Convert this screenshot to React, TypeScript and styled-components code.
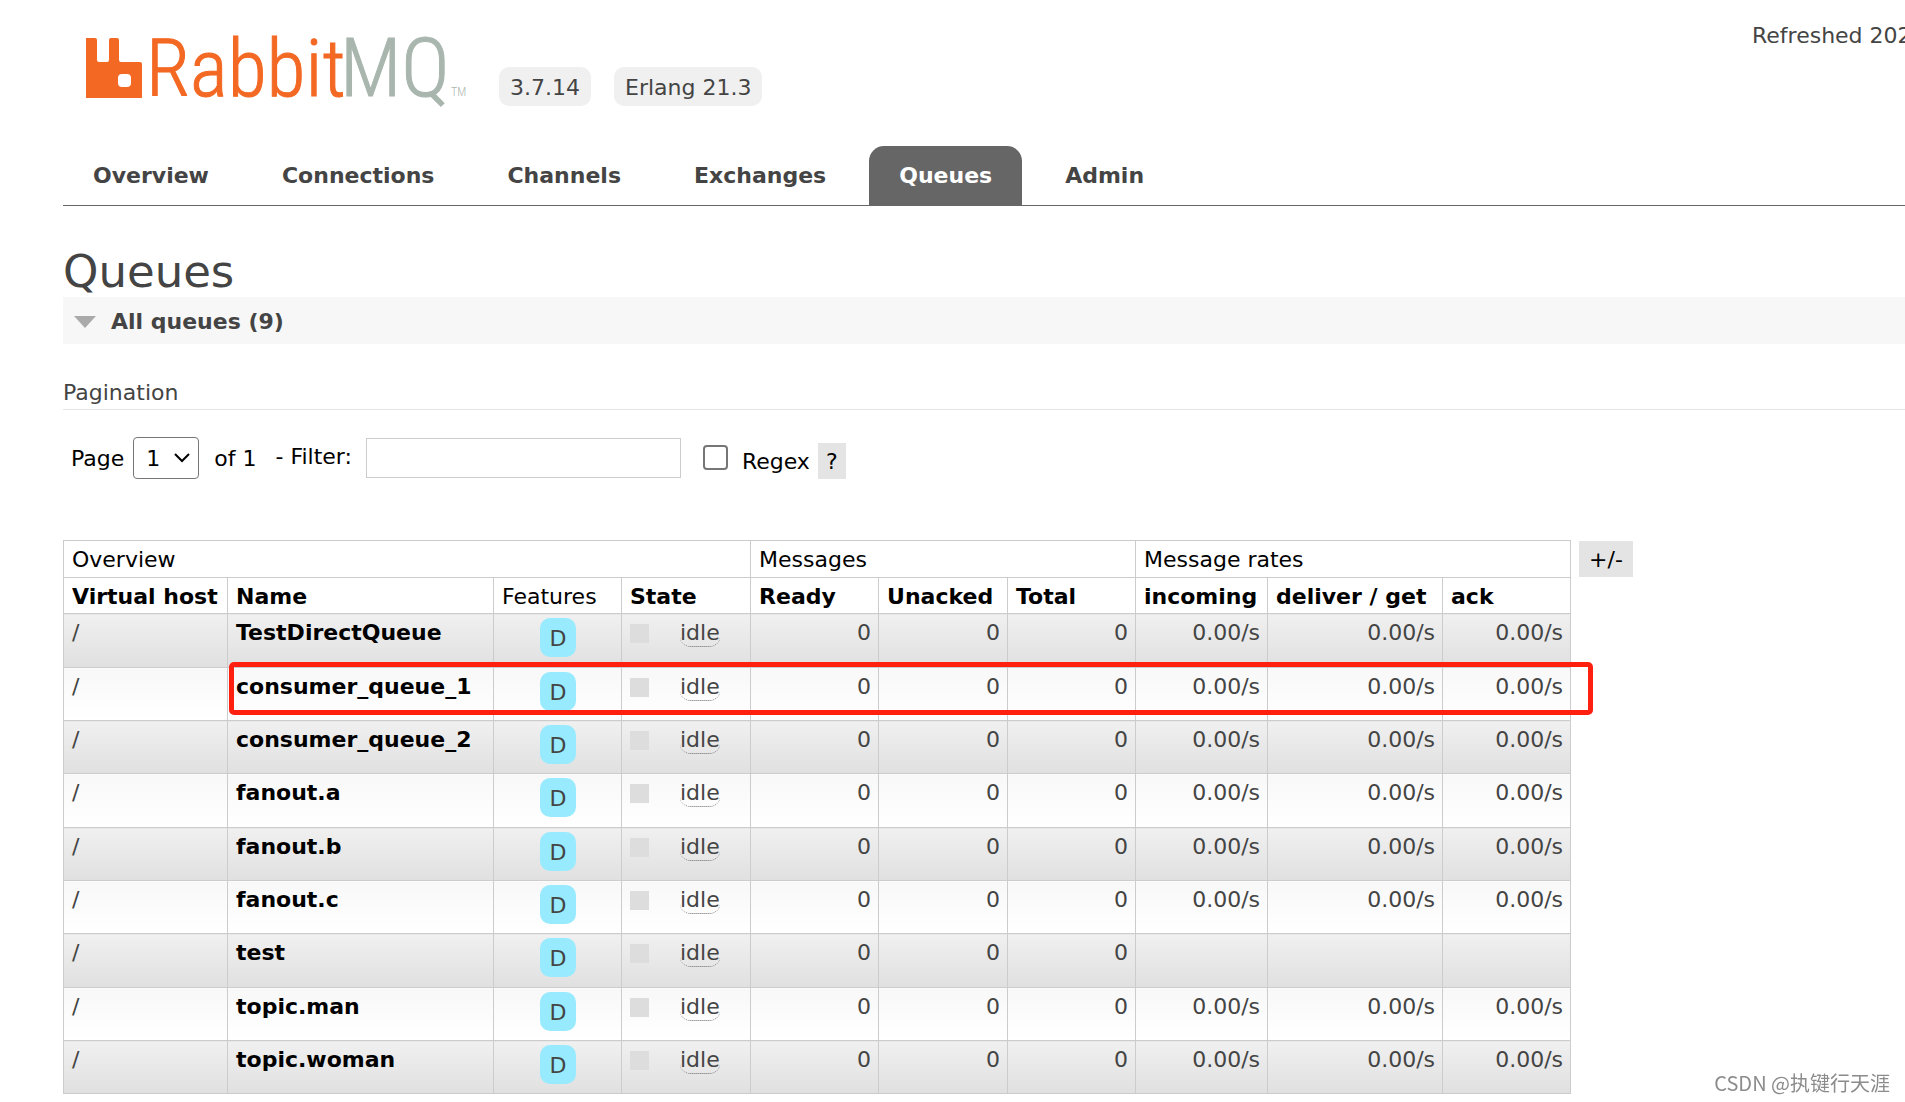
import React from "react";
import styled, { createGlobalStyle } from "styled-components";

const GlobalStyle = createGlobalStyle`
  * { box-sizing: border-box; }
  body {
    margin: 0;
    background: #fff;
    color: #444;
    font: 22px/26px "DejaVu Sans", Verdana, sans-serif;
    overflow: hidden;
  }
  button, input, select { font: inherit; }
`;

const Page = styled.div`
  padding-left: 63px;
`;

const Header = styled.header`
  display: flex;
  justify-content: space-between;
  align-items: flex-start;
  height: 146px;
`;

const Brand = styled.div`
  display: flex;
  align-items: flex-end;
  height: 106px;
  padding-left: 23px;
`;

const LogoLink = styled.a`
  display: block;
  width: 390px;
  height: 80px;
  margin-bottom: 6px;

  svg {
    display: block;
    overflow: visible;
  }
`;

const Versions = styled.div`
  display: flex;
  gap: 23px;
  margin-left: 23px;
`;

const Version = styled.span`
  padding: 8px 11px 5px;
  border-radius: 10px;
  background: #f0f0f0;
`;

const Status = styled.div`
  width: 153px;
  padding-top: 23px;
  white-space: nowrap;
`;

const Tabs = styled.nav`
  display: flex;
  gap: 13px;
  border-bottom: 1px solid #666;
`;

const Tab = styled.a<{ $active?: boolean }>`
  padding: 17px 30px 16px;
  border-radius: 15px 15px 0 0;
  background: ${(p) => (p.$active ? "#666" : "transparent")};
  color: ${(p) => (p.$active ? "#fff" : "#444")};
  font-weight: bold;
  text-decoration: none;
`;

const Title = styled.h1`
  margin: 40px 0 0;
  font-size: 45px;
  line-height: 51px;
  font-weight: normal;
`;

const SectionBar = styled.h2`
  display: flex;
  align-items: center;
  gap: 15px;
  height: 47px;
  margin: 0;
  padding: 2px 11px 0;
  background: #f7f7f7;
  font-size: 22px;
  font-weight: bold;
`;

const Arrow = styled.span`
  border: 11px solid transparent;
  border-top: 12px solid #aaa;
  border-bottom: 0;
`;

const Subtitle = styled.h3`
  margin: 36px 0 0;
  padding-bottom: 3px;
  border-bottom: 1px solid #e4e4e4;
  font-size: 22px;
  font-weight: normal;
`;

const Filters = styled.form`
  display: flex;
  align-items: center;
  margin: 27px 0 61px;
  padding-left: 8px;
  color: #000;
`;

const PageField = styled.label`
  display: flex;
  align-items: center;
  gap: 9px;

  > span:first-child {
    padding-top: 2px;
  }
`;

const SelectBox = styled.span`
  display: grid;
  align-items: center;

  select,
  svg {
    grid-area: 1 / 1;
  }

  svg {
    justify-self: end;
    margin-right: 9px;
    pointer-events: none;
  }
`;

const Select = styled.select`
  appearance: none;
  width: 66px;
  height: 42px;
  padding: 2px 0 0 12px;
  border: 1px solid #767676;
  border-radius: 4px;
  background: #fff;
  color: #000;
`;

const PageCount = styled.span`
  margin: 0 19px 0 15px;
  padding-top: 2px;
`;

const FilterField = styled.label`
  display: flex;
  align-items: center;
  gap: 14px;

  span {
    padding-bottom: 2px;
  }
`;

const TextInput = styled.input`
  width: 315px;
  height: 40px;
  border: 1px solid #ccc;
  background: #fff;
`;

const RegexField = styled.label`
  display: flex;
  align-items: flex-start;
  gap: 14px;
  margin: 4px 8px 0 22px;

  span {
    padding-top: 4px;
  }
`;

const Checkbox = styled.input`
  appearance: none;
  width: 25px;
  height: 25px;
  margin: 0;
  border: 2px solid #767676;
  border-radius: 4px;
  background: #fff;
`;

const GreyButton = styled.button<{ $pad: number }>`
  height: 36px;
  padding: 2px ${(p) => p.$pad}px 0;
  border: 0;
  background: #e4e4e4;
  color: #000;
`;

const HelpSlot = styled.span`
  padding-top: 6px;
  display: flex;
`;

const Listing = styled.div`
  display: flex;
  align-items: flex-start;
  gap: 8px;
  padding-bottom: 7px;

  > button {
    margin-top: 1px;
  }
`;

const Table = styled.table`
  table-layout: fixed;
  width: 1508px;
  border-collapse: collapse;

  th,
  td {
    padding: 0 7px 0 8px;
    border: 1px solid #ccc;
    white-space: nowrap;
  }

  th {
    height: 36px;
    padding-top: 2px;
    color: #000;
    text-align: left;
  }

  thead tr:first-child th {
    height: 37px;
  }

  td {
    height: 53px;
    padding-top: 6px;
    vertical-align: top;
  }

  tbody tr:nth-child(3n + 1) td {
    height: 54px;
  }
`;

const Col = styled.col<{ $w: number }>`
  width: ${(p) => p.$w}px;
`;

const Th = styled.th<{ $plain?: boolean }>`
  font-weight: ${(p) => (p.$plain ? "normal" : "bold")};
`;

const Row = styled.tr`
  position: relative;

  &:nth-child(odd) td {
    background: linear-gradient(#f0f0f0, #e0e0e0);
  }

  &:nth-child(even) td {
    background: linear-gradient(#f8f8f8, #fff);
  }
`;

const NameLink = styled.a`
  color: #000;
  font-weight: bold;
  text-decoration: none;
`;

const Highlight = styled.span`
  position: absolute;
  z-index: 1;
  inset: -6px -22px 6px 165px;
  border: 5px solid #ff2010;
  border-radius: 5px;
  pointer-events: none;
`;

const FeatureCell = styled.td`
  && {
    padding-top: 4px;
    text-align: center;
  }
`;

const Feature = styled.abbr`
  display: inline-block;
  width: 36px;
  padding: 8px 0 5px;
  border-radius: 10px;
  background: #98ebff;
  text-decoration: none;
`;

const State = styled.div`
  display: flex;
  align-items: flex-start;
  gap: 31px;
`;

const StateDot = styled.span`
  width: 19px;
  height: 19px;
  margin-top: 4px;
  background: #ddd;
`;

const StateText = styled.span`
  height: 27px;
  border-bottom: 1px dotted #666;
  border-radius: 0 0 10px 10px;
`;

const NumberCell = styled.td`
  text-align: right;
`;

const Watermark = styled.div`
  position: fixed;
  right: 15px;
  bottom: 6px;
  color: #8c8c8c;
  font: 20px/26px "Noto Sans CJK SC", sans-serif;
`;

const Logo = () => (
  <svg width="390" height="80" viewBox="0 0 390 80" role="img" aria-label="RabbitMQ">
    <path
      fill="#f36823"
      fillRule="evenodd"
      d="M0 18h9q2 0 2 2v20q0 2 2 2h8q2 0 2-2V20q0-2 2-2h6q2 0 2 2v20q0 2 2 2h19q2 0 2 2v34H0zM36 54q-4 0-4 4v5q0 4 4 4h5q4 0 4-4v-5q0-4-4-4z"
    />
    <g fontFamily="'Roboto Condensed', 'Liberation Sans Narrow', Roboto, sans-serif" fontWeight="300">
      <text x="60" y="76" fontSize="80" fill="#f36823" stroke="#f36823">
        Rabbit
      </text>
      <text x="254" y="76" fontSize="82" fill="#a9b6ae" stroke="#a9b6ae">
        MQ
      </text>
      <text x="365" y="76" fontSize="12" fill="#a9b6ae">
        TM
      </text>
    </g>
  </svg>
);

const tabs = ["Overview", "Connections", "Channels", "Exchanges", "Queues", "Admin"];

const columnWidths = [164, 266, 128, 129, 128, 129, 128, 132, 175, 128];

const columns = [
  "Virtual host",
  "Name",
  "Features",
  "State",
  "Ready",
  "Unacked",
  "Total",
  "incoming",
  "deliver / get",
  "ack",
];

const queues = [
  { name: "TestDirectQueue", rate: "0.00/s" },
  { name: "consumer_queue_1", rate: "0.00/s", highlighted: true },
  { name: "consumer_queue_2", rate: "0.00/s" },
  { name: "fanout.a", rate: "0.00/s" },
  { name: "fanout.b", rate: "0.00/s" },
  { name: "fanout.c", rate: "0.00/s" },
  { name: "test", rate: "" },
  { name: "topic.man", rate: "0.00/s" },
  { name: "topic.woman", rate: "0.00/s" },
];

export default function App() {
  return (
    <Page>
      <GlobalStyle />
      <Header>
        <Brand>
          <LogoLink href="#/">
            <Logo />
          </LogoLink>
          <Versions>
            <Version>3.7.14</Version>
            <Version>Erlang 21.3</Version>
          </Versions>
        </Brand>
        <Status>Refreshed 202</Status>
      </Header>
      <Tabs>
        {tabs.map((tab) => (
          <Tab key={tab} href={`#/${tab.toLowerCase()}`} $active={tab === "Queues"}>
            {tab}
          </Tab>
        ))}
      </Tabs>
      <main>
        <Title>Queues</Title>
        <SectionBar>
          <Arrow />
          All queues (9)
        </SectionBar>
        <Subtitle>Pagination</Subtitle>
        <Filters onSubmit={(e) => e.preventDefault()}>
          <PageField>
            <span>Page</span>
            <SelectBox>
              <Select defaultValue="1">
                <option>1</option>
              </Select>
              <svg width="16" height="10" viewBox="0 0 16 10" fill="none" stroke="#000" strokeWidth="2">
                <path d="M1 1l7 7 7-7" />
              </svg>
            </SelectBox>
          </PageField>
          <PageCount>of 1</PageCount>
          <FilterField>
            <span>- Filter:</span>
            <TextInput type="text" />
          </FilterField>
          <RegexField>
            <Checkbox type="checkbox" />
            <span>Regex</span>
          </RegexField>
          <HelpSlot>
            <GreyButton type="button" $pad={8}>
              ?
            </GreyButton>
          </HelpSlot>
        </Filters>
        <Listing>
          <Table>
            <colgroup>
              {columnWidths.map((w, i) => (
                <Col key={i} $w={w} />
              ))}
            </colgroup>
            <thead>
              <tr>
                <Th $plain colSpan={4}>
                  Overview
                </Th>
                <Th $plain colSpan={3}>
                  Messages
                </Th>
                <Th $plain colSpan={3}>
                  Message rates
                </Th>
              </tr>
              <tr>
                {columns.map((c) => (
                  <Th key={c} $plain={c === "Features"}>
                    {c}
                  </Th>
                ))}
              </tr>
            </thead>
            <tbody>
              {queues.map((q) => (
                <Row key={q.name}>
                  <td>/</td>
                  <td>
                    <NameLink href={`#/queues/${q.name}`}>{q.name}</NameLink>
                    {q.highlighted && <Highlight />}
                  </td>
                  <FeatureCell>
                    <Feature>D</Feature>
                  </FeatureCell>
                  <td>
                    <State>
                      <StateDot />
                      <StateText>idle</StateText>
                    </State>
                  </td>
                  <NumberCell>0</NumberCell>
                  <NumberCell>0</NumberCell>
                  <NumberCell>0</NumberCell>
                  <NumberCell>{q.rate}</NumberCell>
                  <NumberCell>{q.rate}</NumberCell>
                  <NumberCell>{q.rate}</NumberCell>
                </Row>
              ))}
            </tbody>
          </Table>
          <GreyButton type="button" $pad={10}>
            +/-
          </GreyButton>
        </Listing>
      </main>
      <Watermark>CSDN @执键行天涯</Watermark>
    </Page>
  );
}
